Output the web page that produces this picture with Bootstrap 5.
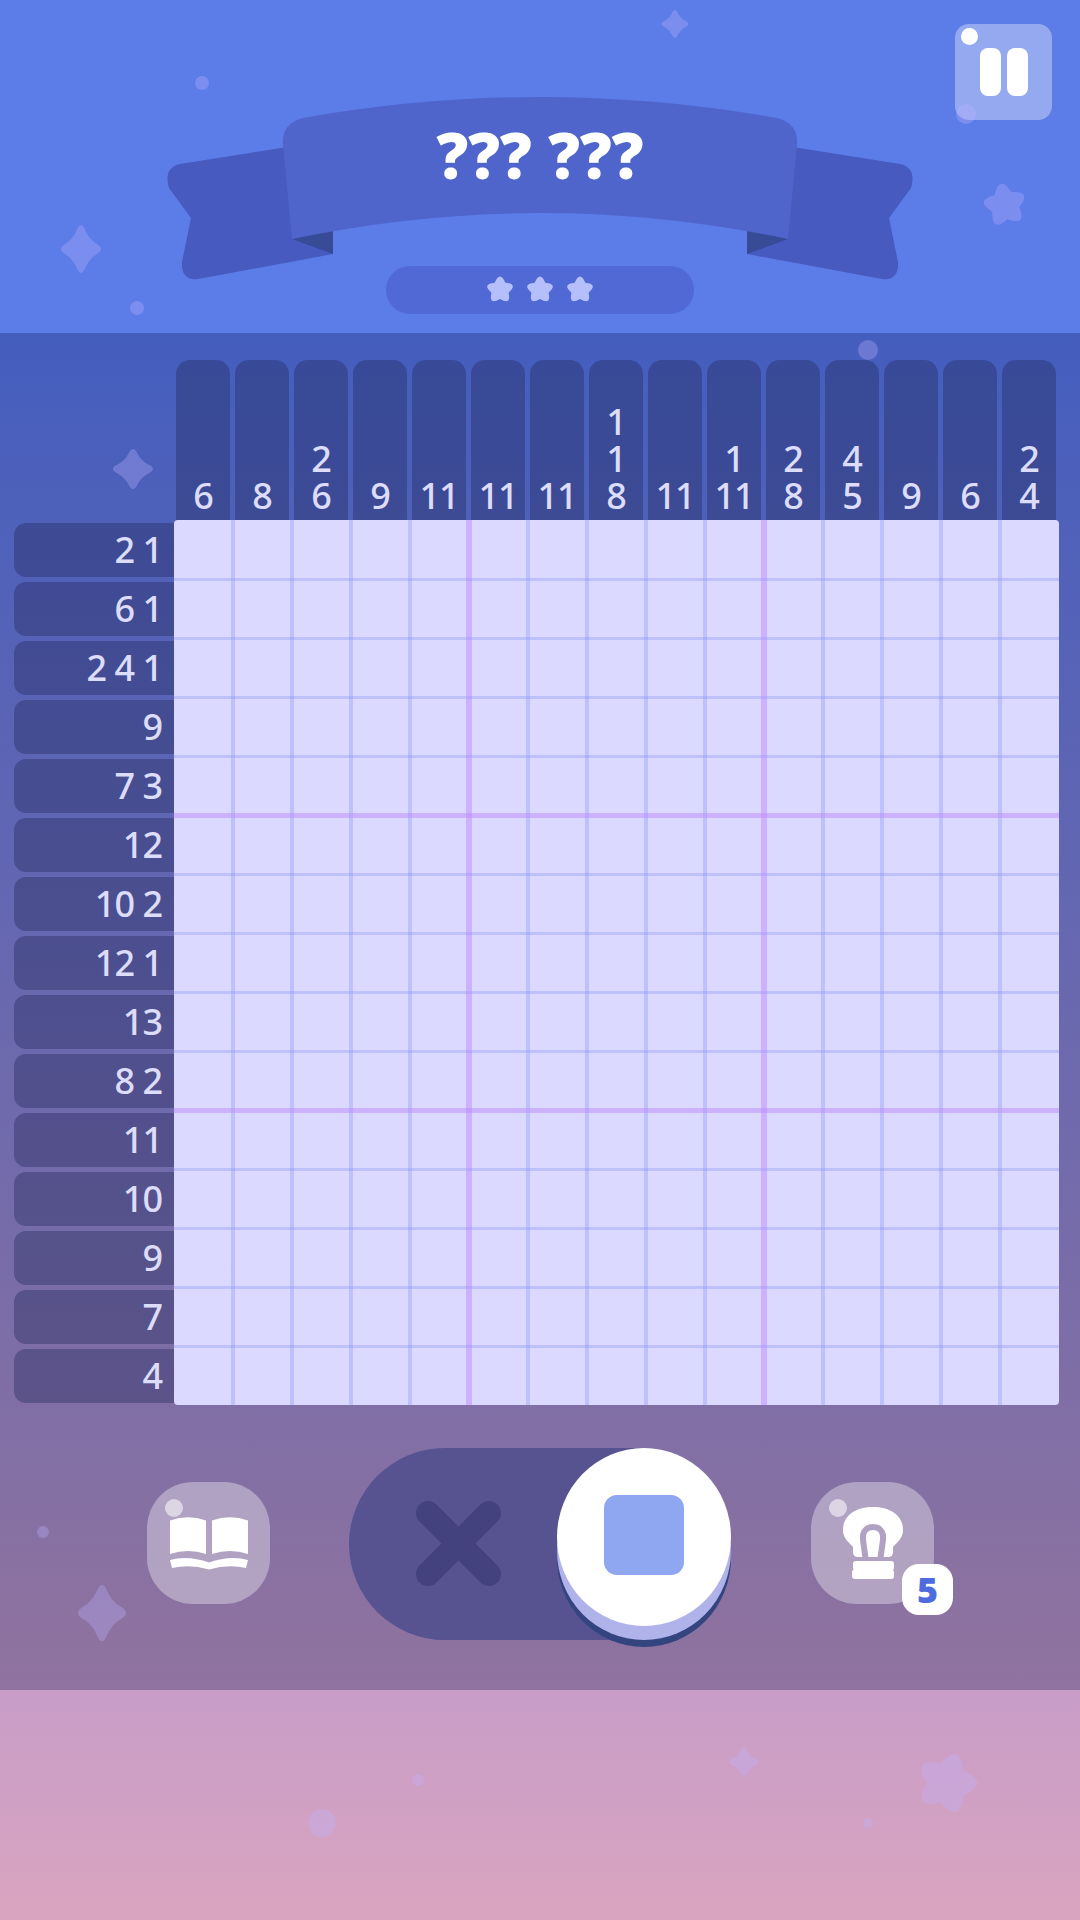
<!DOCTYPE html>
<html lang="en">
<head>
<meta charset="utf-8">
<title>Nonogram</title>
<link href="https://cdn.jsdelivr.net/npm/bootstrap@5.3.0/dist/css/bootstrap.min.css" rel="stylesheet">
<style>
html,body{margin:0;padding:0;background:#5c7ce8}
.game-page{width:1080px;height:1920px;overflow:hidden;font-family:"Noto Sans",sans-serif}
.top-zone{height:333px;padding-top:97px;background:#5c7ce8}
.ribbon-wrap{width:800px;height:169px}
.ribbon-svg{display:block;overflow:visible}
.ribbon-title{top:0;left:0;right:0;height:114px;color:#fff;font-family:"Open Sans",sans-serif;font-weight:800;font-size:63px;line-height:1}
.stars-pill{width:308px;height:48px;gap:10px;background:#5069d5}
.glass-btn{background:rgba(255,255,255,.35);border:0;padding:0}
.glass-btn:hover,.glass-btn:active{background:rgba(255,255,255,.35)}
.pause-btn{top:24px;right:28px;width:97px;height:96px;border-radius:14px}
.glint{width:17px;height:17px;background:#fff;top:4px;left:6px}
.pause-bar{width:21px;height:48px;border-radius:8px;background:#fff}
.pause-pair{gap:6px;padding-left:1px}
.play-zone{height:1357px;padding-top:27px;background:linear-gradient(180deg,#445ebe 0%,#90739f 100%)}
.board-grid{display:grid;grid-template-columns:174px 885px;grid-template-rows:160px 885px}
.col-clues{gap:5px;padding-left:2px}
.col-clue{width:54px;height:160px;border-radius:14px 14px 0 0;padding-bottom:6px;background:rgba(35,40,90,.38)}
.col-clue,.row-clue{color:#dcdcfb;font-size:36px;font-weight:500;line-height:37px;letter-spacing:-1px}
.row-clues{gap:5px;padding:3px 0 0 14px}
.row-clue{height:54px;border-radius:12px 0 0 12px;padding:0 12px 2px 0;background:rgba(35,40,90,.38)}
.cell-field{border-radius:4px;background-color:#dbd9ff;background-image:
 linear-gradient(rgba(190,138,253,.5),rgba(190,138,253,.5)),linear-gradient(rgba(190,138,253,.5),rgba(190,138,253,.5)),
 linear-gradient(rgba(190,138,253,.5),rgba(190,138,253,.5)),linear-gradient(rgba(190,138,253,.5),rgba(190,138,253,.5)),
 repeating-linear-gradient(90deg,transparent 0 57px,rgba(135,148,243,.35) 57px 61px,transparent 61px 116px,rgba(135,148,243,.35) 116px 120px,transparent 120px 175px,rgba(135,148,243,.35) 175px 179px,transparent 179px 234px,rgba(135,148,243,.35) 234px 238px,transparent 238px 295px),
 repeating-linear-gradient(180deg,transparent 0 58px,rgba(135,148,243,.35) 58px 61px,transparent 61px 117px,rgba(135,148,243,.35) 117px 120px,transparent 120px 176px,rgba(135,148,243,.35) 176px 179px,transparent 179px 235px,rgba(135,148,243,.35) 235px 238px,transparent 238px 295px);
 background-size:6px 100%,6px 100%,100% 5px,100% 5px,auto,auto;
 background-position:292px 0,587px 0,0 293px,0 588px,0 0,0 0;
 background-repeat:no-repeat,no-repeat,no-repeat,no-repeat,repeat,repeat}
.control-row{margin-top:43px;padding-left:147px;gap:79px}
.round-btn{width:123px;height:122px;border-radius:46px;margin-bottom:2px}
.hint-btn{margin-left:1px}
.round-btn .glint{width:18px;height:18px;top:17px;left:18px;background:rgba(255,255,255,.55)}
.mode-track{width:382px;height:192px;border-radius:96px;background:#575391}
.cross-icon{left:67px;top:53px}
.mode-knob{top:0;right:0;width:174px;height:178px;padding-bottom:4px;border-radius:50%;background:#fff;box-shadow:0 14px 0 #afb3ea,0 21px 0 #33447f}
.knob-square{width:80px;height:80px;border-radius:13px;background:#8fa6f0}
.hint-count{width:51px;height:51px;right:-19px;bottom:-11px;border-radius:17px;background:#fff;color:#4f6be0;font-family:"Open Sans",sans-serif;font-weight:800;font-size:36px;line-height:1}
.bottom-zone{height:230px;background:linear-gradient(180deg,#c89dc8 0%,#d9a4bf 100%)}
.deco-layer{top:0;left:0;pointer-events:none}
.deco-layer use,.deco-layer circle{fill:rgba(190,180,255,.32)}
</style>
</head>
<body>
<div class="game-page position-relative d-flex flex-column">
  <svg width="0" height="0" class="position-absolute">
    <defs>
      <path id="sparkle" d="M0-1C.18-1 .24-.62 .46-.46C.62-.24 1-.18 1 0C1 .18 .62 .24 .46 .46C.24 .62 .18 1 0 1C-.18 1-.24 .62-.46 .46C-.62 .24-1 .18-1 0C-1-.18-.62-.24-.46-.46C-.24-.62-.18-1 0-1Z"/>
      <path id="star" d="M-.353-.485Q0-1.3 .353-.485Q1.236-.402 .571 .185Q.764 1.052 0 .6Q-.764 1.052-.571 .185Q-1.236-.402-.353-.485Z"/>
    </defs>
  </svg>

  <header class="top-zone position-relative">
    <div class="ribbon-wrap position-relative mx-auto">
      <svg class="ribbon-svg" width="800" height="169" viewBox="140 97 800 169">
        <path fill="#475abf" d="M300 145L180 164Q163 168 169 188L191 218L182 262Q181 281 198 279L333 254L333 200Z"/>
        <path fill="#475abf" d="M780 145L900 164Q917 168 911 188L889 218L898 262Q899 281 882 279L747 254L747 200Z"/>
        <path fill="#374b97" d="M292 239L333 254L333 225Z"/>
        <path fill="#374b97" d="M788 239L747 254L747 225Z"/>
        <path fill="#5065cb" d="M292 239L283 145Q281 124 303 118Q540 76 777 118Q799 124 797 145L788 239Q540 187 292 239Z"/>
      </svg>
      <div class="ribbon-title position-absolute d-flex align-items-center justify-content-center">??? ???</div>
    </div>
    <div class="stars-pill rounded-pill mx-auto d-flex align-items-center justify-content-center">
      <svg width="30" height="30" viewBox="-1 -1 2 2"><use href="#star" fill="#b5bffb"/></svg>
      <svg width="30" height="30" viewBox="-1 -1 2 2"><use href="#star" fill="#b5bffb"/></svg>
      <svg width="30" height="30" viewBox="-1 -1 2 2"><use href="#star" fill="#b5bffb"/></svg>
    </div>
    <button class="btn glass-btn pause-btn position-absolute d-flex align-items-center justify-content-center" aria-label="Pause">
      <span class="glint rounded-circle position-absolute"></span>
      <span class="pause-pair d-flex"><span class="pause-bar"></span><span class="pause-bar"></span></span>
    </button>
  </header>

  <main class="play-zone">
    <div class="board-grid">
      <div></div>
      <div class="col-clues d-flex">
        <div class="col-clue d-flex flex-column justify-content-end align-items-center"><span>6</span></div>
        <div class="col-clue d-flex flex-column justify-content-end align-items-center"><span>8</span></div>
        <div class="col-clue d-flex flex-column justify-content-end align-items-center"><span>2</span><span>6</span></div>
        <div class="col-clue d-flex flex-column justify-content-end align-items-center"><span>9</span></div>
        <div class="col-clue d-flex flex-column justify-content-end align-items-center"><span>11</span></div>
        <div class="col-clue d-flex flex-column justify-content-end align-items-center"><span>11</span></div>
        <div class="col-clue d-flex flex-column justify-content-end align-items-center"><span>11</span></div>
        <div class="col-clue d-flex flex-column justify-content-end align-items-center"><span>1</span><span>1</span><span>8</span></div>
        <div class="col-clue d-flex flex-column justify-content-end align-items-center"><span>11</span></div>
        <div class="col-clue d-flex flex-column justify-content-end align-items-center"><span>1</span><span>11</span></div>
        <div class="col-clue d-flex flex-column justify-content-end align-items-center"><span>2</span><span>8</span></div>
        <div class="col-clue d-flex flex-column justify-content-end align-items-center"><span>4</span><span>5</span></div>
        <div class="col-clue d-flex flex-column justify-content-end align-items-center"><span>9</span></div>
        <div class="col-clue d-flex flex-column justify-content-end align-items-center"><span>6</span></div>
        <div class="col-clue d-flex flex-column justify-content-end align-items-center"><span>2</span><span>4</span></div>
      </div>
      <div class="row-clues d-flex flex-column">
        <div class="row-clue d-flex align-items-center justify-content-end">2 1</div>
        <div class="row-clue d-flex align-items-center justify-content-end">6 1</div>
        <div class="row-clue d-flex align-items-center justify-content-end">2 4 1</div>
        <div class="row-clue d-flex align-items-center justify-content-end">9</div>
        <div class="row-clue d-flex align-items-center justify-content-end">7 3</div>
        <div class="row-clue d-flex align-items-center justify-content-end">12</div>
        <div class="row-clue d-flex align-items-center justify-content-end">10 2</div>
        <div class="row-clue d-flex align-items-center justify-content-end">12 1</div>
        <div class="row-clue d-flex align-items-center justify-content-end">13</div>
        <div class="row-clue d-flex align-items-center justify-content-end">8 2</div>
        <div class="row-clue d-flex align-items-center justify-content-end">11</div>
        <div class="row-clue d-flex align-items-center justify-content-end">10</div>
        <div class="row-clue d-flex align-items-center justify-content-end">9</div>
        <div class="row-clue d-flex align-items-center justify-content-end">7</div>
        <div class="row-clue d-flex align-items-center justify-content-end">4</div>
      </div>
      <div class="cell-field"></div>
    </div>

    <div class="control-row d-flex align-items-center">
      <button class="btn glass-btn round-btn position-relative d-flex align-items-center justify-content-center" aria-label="Rules">
        <span class="glint rounded-circle position-absolute"></span>
        <svg width="78" height="54" viewBox="0 0 78 54" fill="#fff">
          <path d="M0 4.5Q18-2 36 4.5V38Q18 32 0 38Z"/>
          <path d="M42 4.5Q60-2 78 4.5V38Q60 32 42 38Z"/>
          <path d="M0 44Q18 39 39 46.5Q60 39 78 44L76 52Q58 48 39 53.5Q20 48 2 52Z"/>
        </svg>
      </button>
      <div class="mode-track position-relative">
        <svg class="cross-icon position-absolute" width="85" height="85" viewBox="0 0 85 85">
          <path d="M12 12L73 73M73 12L12 73" stroke="#44417f" stroke-width="24" stroke-linecap="round" fill="none"/>
        </svg>
        <div class="mode-knob position-absolute d-flex align-items-center justify-content-center">
          <span class="knob-square"></span>
        </div>
      </div>
      <button class="btn glass-btn round-btn hint-btn position-relative d-flex align-items-center justify-content-center" aria-label="Hint">
        <span class="glint rounded-circle position-absolute"></span>
        <svg width="60" height="72" viewBox="0 0 60 72" fill="#fff">
          <path d="M30 0C48 0 60 9 60 23C60 32 53 36 50 40V45Q50 50 45 50H15Q10 50 10 45V40C7 36 0 32 0 23C0 9 12 0 30 0Z"/>
          <path d="M22.5 51L20 33C19 24 24 20 30 20C36 20 41 24 40 33L37.5 51" fill="none" stroke="#b0a2c3" stroke-width="6"/>
          <rect x="10" y="54" width="41" height="9.5" rx="3"/>
          <rect x="9" y="62.5" width="42" height="9.5" rx="3"/>
        </svg>
        <span class="hint-count position-absolute d-flex align-items-center justify-content-center">5</span>
      </button>
    </div>
  </main>

  <footer class="bottom-zone"></footer>

  <svg class="deco-layer position-absolute" width="1080" height="1920" viewBox="0 0 1080 1920">
    <use href="#sparkle" transform="translate(675 24) scale(13.5 14)"/>
    <use href="#sparkle" transform="translate(81 249) scale(20 24)"/>
    <use href="#sparkle" transform="translate(133 469) scale(20)"/>
    <use href="#sparkle" transform="translate(102 1613) scale(24 28)"/>
    <use href="#sparkle" transform="translate(744 1762) scale(15)"/>
    <use href="#star" transform="translate(1005 205) rotate(-10) scale(24)"/>
    <use href="#star" transform="translate(947 1783) rotate(18) scale(34)"/>
    <circle cx="202" cy="83" r="7"/>
    <circle cx="137" cy="308" r="7"/>
    <circle cx="966" cy="114" r="10"/>
    <circle cx="868" cy="350" r="10"/>
    <circle cx="43" cy="1532" r="6"/>
    <circle cx="418" cy="1780" r="6"/>
    <circle cx="322" cy="1823" r="14"/>
    <circle cx="868" cy="1823" r="5"/>
  </svg>
</div>
<script src="https://cdn.jsdelivr.net/npm/bootstrap@5.3.0/dist/js/bootstrap.bundle.min.js"></script>
</body>
</html>
